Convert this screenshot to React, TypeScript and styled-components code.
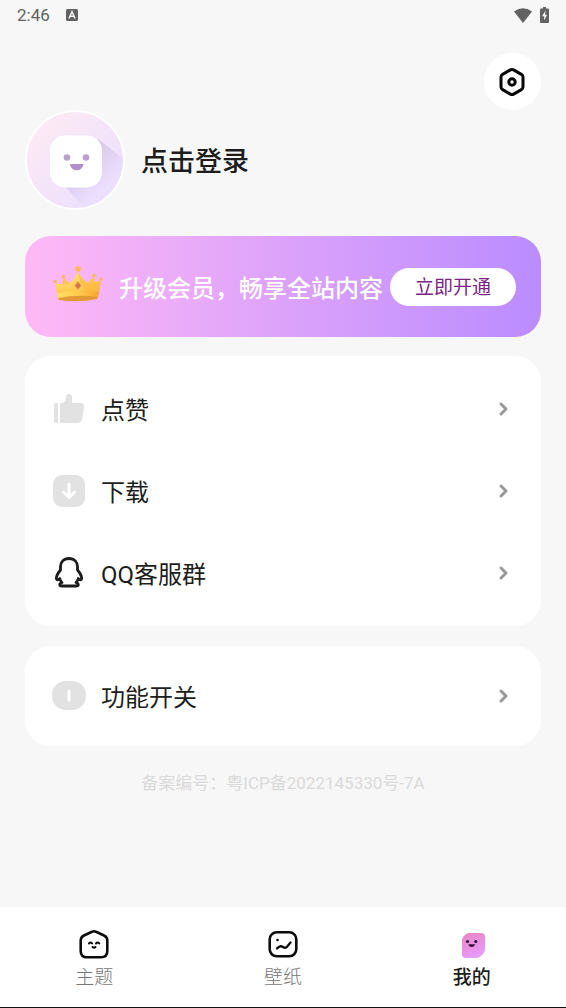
import React from "react";
import styled, { createGlobalStyle } from "styled-components";

const GlobalStyle = createGlobalStyle`
  * { box-sizing: border-box; }
  body {
    margin: 0;
    background: #f7f7f7;
    color: #1d1d1b;
    font-family: Roboto, "Noto Sans CJK SC", sans-serif;
  }
  button { font: inherit; color: inherit; border: 0; padding: 0; background: none; cursor: pointer; }
  a { color: inherit; text-decoration: none; }
  svg { display: block; flex: none; }
`;

const Page = styled.div`
  min-height: 100vh;
  display: flex;
  flex-direction: column;
`;

const StatusBar = styled.div`
  height: 30px;
  padding: 0 17px;
  display: flex;
  align-items: center;
  gap: 16px;
  color: #626262;
  font-size: 17px;
  line-height: 30px;
`;

const StatusIcons = styled.div`
  margin-left: auto;
  display: flex;
  align-items: center;
  gap: 8px;
`;

const Content = styled.main`
  flex: 1;
  padding: 23px 25px 24px;
  display: flex;
  flex-direction: column;
`;

const SettingsButton = styled.button`
  align-self: flex-end;
  width: 57px;
  height: 57px;
  border-radius: 50%;
  background: #fff;
  display: grid;
  place-items: center;
`;

const Profile = styled.button`
  align-self: flex-start;
  display: flex;
  align-items: center;
  gap: 16px;
  margin-bottom: 26px;
`;

const ProfileName = styled.span`
  padding-top: 4px;
  font-size: 27px;
  line-height: 40px;
  font-weight: 500;
`;

const Banner = styled.section`
  height: 101px;
  margin-bottom: 19px;
  padding: 0 25px 0 28px;
  border-radius: 26px;
  background: linear-gradient(90deg, #ffb9f6, #ba8cff);
  display: flex;
  align-items: center;
`;

const BannerText = styled.span`
  padding-top: 4px;
  margin-left: 16px;
  color: #fff;
  font-size: 24px;
  line-height: 36px;
  font-weight: 500;
  white-space: nowrap;
`;

const UpgradeButton = styled.button`
  && { color: #7b2480; background: #fff; padding-top: 2px; }
  flex: none;
  width: 126px;
  height: 38px;
  margin-left: auto;
  border-radius: 19px;
  font-size: 19px;
  line-height: 36px;
`;

const Card = styled.nav<{ $pad: number }>`
  padding: ${(p) => p.$pad}px 31px ${(p) => p.$pad}px 26px;
  margin-bottom: 20px;
  border-radius: 26px;
  background: #fff;
`;

const Row = styled.a`
  height: 82px;
  display: flex;
  align-items: center;
  gap: 14px;
  font-size: 24px;
  line-height: 36px;
`;

const RowLabel = styled.span`
  flex: 1;
  padding-top: 4px;
`;

const License = styled.p`
  margin: 4px 0 0;
  text-align: center;
  color: #dadada;
  font-size: 17px;
  line-height: 26px;
`;

const TabBar = styled.nav`
  height: 101px;
  padding-top: 20px;
  display: flex;
  background: #fff;
  border-bottom: 1px solid #111;
`;

const Tab = styled.a<{ $active?: boolean }>`
  flex: 1;
  display: flex;
  flex-direction: column;
  align-items: center;
  gap: 3px;
  font-size: 19px;
  line-height: 28px;
  color: ${(p) => (p.$active ? "#1d1d1b" : "#777")};
  font-weight: ${(p) => (p.$active ? 500 : 300)};
`;

const Chevron = () => (
  <svg width="12" height="16" viewBox="0 0 12 16" fill="none" stroke="#999" strokeWidth="3" strokeLinecap="round" strokeLinejoin="round">
    <path d="M3 3l5 5-5 5" />
  </svg>
);

const Avatar = () => (
  <svg width="100" height="100" viewBox="0 0 100 100">
    <defs>
      <linearGradient id="avatarBg" x1="0.1" y1="0.1" x2="0.85" y2="0.9">
        <stop offset="0" stopColor="#fdeaf3" />
        <stop offset="1" stopColor="#ebdfff" />
      </linearGradient>
      <linearGradient id="avatarShade" gradientUnits="userSpaceOnUse" x1="54" y1="50" x2="80" y2="78">
        <stop offset="0" stopColor="#d3c0e6" />
        <stop offset="1" stopColor="#ebdfff" />
      </linearGradient>
      <clipPath id="avatarClip"><circle cx="50" cy="50" r="48" /></clipPath>
    </defs>
    <circle cx="50" cy="50" r="49" fill="url(#avatarBg)" stroke="#fff" strokeWidth="2" />
    <path clipPath="url(#avatarClip)" d="M73 29L110 58L70 110L35 71Z" fill="url(#avatarShade)" opacity="0.8" />
    <rect x="25" y="25.500" width="52" height="52" rx="15" fill="#fff" />
    <circle cx="42" cy="47.500" r="3.300" fill="#b9a1cd" />
    <circle cx="61" cy="47.500" r="3.300" fill="#b9a1cd" />
    <path d="M45 54H58.500C58 58 55 60.300 51.700 60.300S45.500 58 45 54Z" fill="#b08fca" />
  </svg>
);

const Crown = () => (
  <svg width="50" height="44" viewBox="0 0 50 44">
    <defs>
      <linearGradient id="crownGold" x1="0" y1="0" x2="0.2" y2="1">
        <stop offset="0" stopColor="#ffdf80" />
        <stop offset="0.55" stopColor="#ffd35c" />
        <stop offset="1" stopColor="#fcb63a" />
      </linearGradient>
      <linearGradient id="crownBand" x1="0" y1="0" x2="1" y2="0">
        <stop offset="0" stopColor="#ffdc64" />
        <stop offset="0.5" stopColor="#ffcb4e" />
        <stop offset="1" stopColor="#f7a52e" />
      </linearGradient>
    </defs>
    <path d="M11 12L22 26H7ZM41 11L44 26H28Z" fill="#fdc256" />
    <path d="M2 18Q8 20 15 19Q21 16 25 6Q29 16 36 18Q43 18 48 15L45 33Q25 38 5 34Z" fill="url(#crownGold)" />
    <path d="M25 6Q29 16 36 18Q43 18 48 15L46 28Q37 30 32 25Q26 18 25 6Z" fill="#f8ab34" opacity="0.45" />
    <path d="M5 31Q25 27 45 30L44 34Q25 38 6 35Z" fill="#e39a35" />
    <path d="M4 28Q25 23 46 27L45 32Q25 29 5 33Z" fill="url(#crownBand)" />
    <path d="M25 16L28.500 20.500L25 25L21.500 20.500Z" fill="#dc7444" stroke="#fcc165" />
    <circle cx="25" cy="4" r="2.800" fill="#f9b94c" />
    <circle cx="2" cy="16.500" r="1.700" fill="#fab85a" />
    <circle cx="48" cy="14" r="1.700" fill="#fab85a" />
    <circle cx="10.500" cy="11.500" r="1.800" fill="#fab85a" />
    <circle cx="41" cy="10.500" r="1.800" fill="#fab85a" />
  </svg>
);

const LikeIcon = () => (
  <svg width="36" height="36" viewBox="0 0 36 36" fill="#e2e2e2">
    <path d="M5 12H7V32H5Q3 32 3 29V15Q3 12 5 12Z" />
    <path d="M9 12H12Q15 9 15 6Q15 3 18 3Q21 3 21 7V12H29Q34 12 33 17L31 28Q30 32 26 32H9Z" />
  </svg>
);

const DownloadIcon = () => (
  <svg width="36" height="36" viewBox="0 0 36 36">
    <rect x="2" y="2" width="32" height="32" rx="9" fill="#e2e2e2" />
    <path d="M18 11V24M12.500 19L18 24.500L23.500 19" fill="none" stroke="#fff" strokeWidth="3" strokeLinecap="round" strokeLinejoin="round" />
  </svg>
);

const PenguinIcon = () => (
  <svg width="36" height="36" viewBox="0 0 36 36" fill="none" stroke="#1c1c1c" strokeWidth="2.800" strokeLinejoin="round">
    <path d="M18 3.500C12.500 3.500 9.500 7.300 9.500 11.800V15C7 18 5.300 20.500 5.300 23.500C6 25.500 7.500 25 8.700 23.500C9 25 9.800 26.500 11 27.500C8 28.500 8 31 11 31H25C28 31 28 28.500 25 27.500C26.200 26.500 27 25 27.300 23.500C28.500 25 30 25.500 30.700 23.500C30.700 20.500 29 18 26.500 15V11.800C26.500 7.300 23.500 3.500 18 3.500Z" />
  </svg>
);

const ToggleIcon = () => (
  <svg width="36" height="36" viewBox="0 0 36 36">
    <rect x="1" y="3" width="34" height="29" rx="14" fill="#e2e2e2" />
    <path d="M18 13V22" stroke="#fff" strokeWidth="3" strokeLinecap="round" />
  </svg>
);

const rows = [
  { label: "点赞", icon: <LikeIcon /> },
  { label: "下载", icon: <DownloadIcon /> },
  { label: "QQ客服群", icon: <PenguinIcon /> },
];

const MenuRow = ({ label, icon }: { label: string; icon: React.ReactNode }) => (
  <Row href="#">
    {icon}
    <RowLabel>{label}</RowLabel>
    <Chevron />
  </Row>
);

export default function App() {
  return (
    <Page>
      <GlobalStyle />
      <StatusBar>
        <span>2:46</span>
        <svg width="12" height="12" viewBox="0 0 12 12">
          <rect width="12" height="12" rx="1.500" fill="#626262" />
          <path d="M3 9.500L6 2.500L9 9.500M4.200 7.300H7.800" fill="none" stroke="#f6f6f6" strokeWidth="1.400" />
        </svg>
        <StatusIcons>
          <svg width="18" height="15" viewBox="0 0 18 15">
            <path d="M0 3.500Q9-3 18 3.500L9 15Z" fill="#626262" />
          </svg>
          <svg width="9" height="16" viewBox="0 0 9 16">
            <path d="M3 0H6V1.500H8Q9 1.500 9 2.500V15Q9 16 8 16H1Q0 16 0 15V2.500Q0 1.500 1 1.500H3Z" fill="#626262" />
            <path d="M5.500 3.500L2 9.300H4.200V13.500L7 7.800H5Z" fill="#f6f6f6" />
          </svg>
        </StatusIcons>
      </StatusBar>
      <Content>
        <SettingsButton aria-label="设置">
          <svg width="31" height="30" viewBox="0 0 31 30" fill="none" stroke="#080808" strokeWidth="3" strokeLinejoin="round">
            <path d="M13.400 2.900Q15 2 16.600 2.900L24.400 7.400Q26 8.300 26 10.100V19.900Q26 21.700 24.400 22.600L16.600 27.100Q15 28 13.400 27.100L5.600 22.600Q4 21.700 4 19.900V10.100Q4 8.300 5.600 7.400Z" />
            <circle cx="15" cy="15" r="3.200" />
          </svg>
        </SettingsButton>
        <Profile>
          <Avatar />
          <ProfileName>点击登录</ProfileName>
        </Profile>
        <Banner>
          <Crown />
          <BannerText>升级会员，畅享全站内容</BannerText>
          <UpgradeButton>立即开通</UpgradeButton>
        </Banner>
        <Card $pad={12}>
          {rows.map((r) => (
            <MenuRow key={r.label} {...r} />
          ))}
        </Card>
        <Card $pad={9}>
          <MenuRow label="功能开关" icon={<ToggleIcon />} />
        </Card>
        <License>备案编号：粤ICP备2022145330号-7A</License>
      </Content>
      <TabBar>
        <Tab href="#">
          <svg width="34" height="34" viewBox="0 0 34 34" fill="none" stroke="#0c0c0c" strokeWidth="2.600" strokeLinecap="round" strokeLinejoin="round">
            <path d="M15 4.800Q17 3.800 19 4.800L27 8.500Q30.300 10 30.300 13.500V24Q30.300 30.300 24 30.300H10Q3.700 30.300 3.700 24V13.500Q3.700 10 7 8.500Z" />
            <path d="M12 16.500Q13.700 14.500 15.200 16.500M19 16.500Q20.700 14.500 22.300 16.500M15.500 20Q17 21.500 18.500 20" strokeWidth="2" />
          </svg>
          主题
        </Tab>
        <Tab href="#">
          <svg width="34" height="34" viewBox="0 0 34 34" fill="none" stroke="#0c0c0c" strokeWidth="2.600" strokeLinecap="round" strokeLinejoin="round">
            <rect x="3.700" y="5.300" width="26.600" height="24" rx="7" />
            <circle cx="11.500" cy="13" r="1.300" fill="#0c0c0c" stroke="none" />
            <path d="M11 21.500Q14 18 17 20T22 18.500L24.500 15.500" strokeWidth="2.300" />
          </svg>
          壁纸
        </Tab>
        <Tab href="#" $active>
          <svg width="34" height="34" viewBox="0 0 34 34">
            <defs>
              <linearGradient id="mineFill" x1="0" y1="0" x2="0.4" y2="1">
                <stop offset="0" stopColor="#e985c2" />
                <stop offset="1" stopColor="#e79af8" />
              </linearGradient>
            </defs>
            <path d="M14 6H26Q30 6 30 10V22Q30 25 28 27L26 29Q24 31 21 31H11Q7 31 7 27V13Q7 11 8.500 9.500L10.500 7.500Q12 6 14 6Z" fill="url(#mineFill)" />
            <circle cx="12.500" cy="14.500" r="1.600" fill="#35123f" />
            <circle cx="20.800" cy="14.500" r="1.600" fill="#35123f" />
            <path d="M13.500 17.300H20Q19.500 20 16.700 20T13.500 17.300Z" fill="#35123f" />
          </svg>
          我的
        </Tab>
      </TabBar>
    </Page>
  );
}
